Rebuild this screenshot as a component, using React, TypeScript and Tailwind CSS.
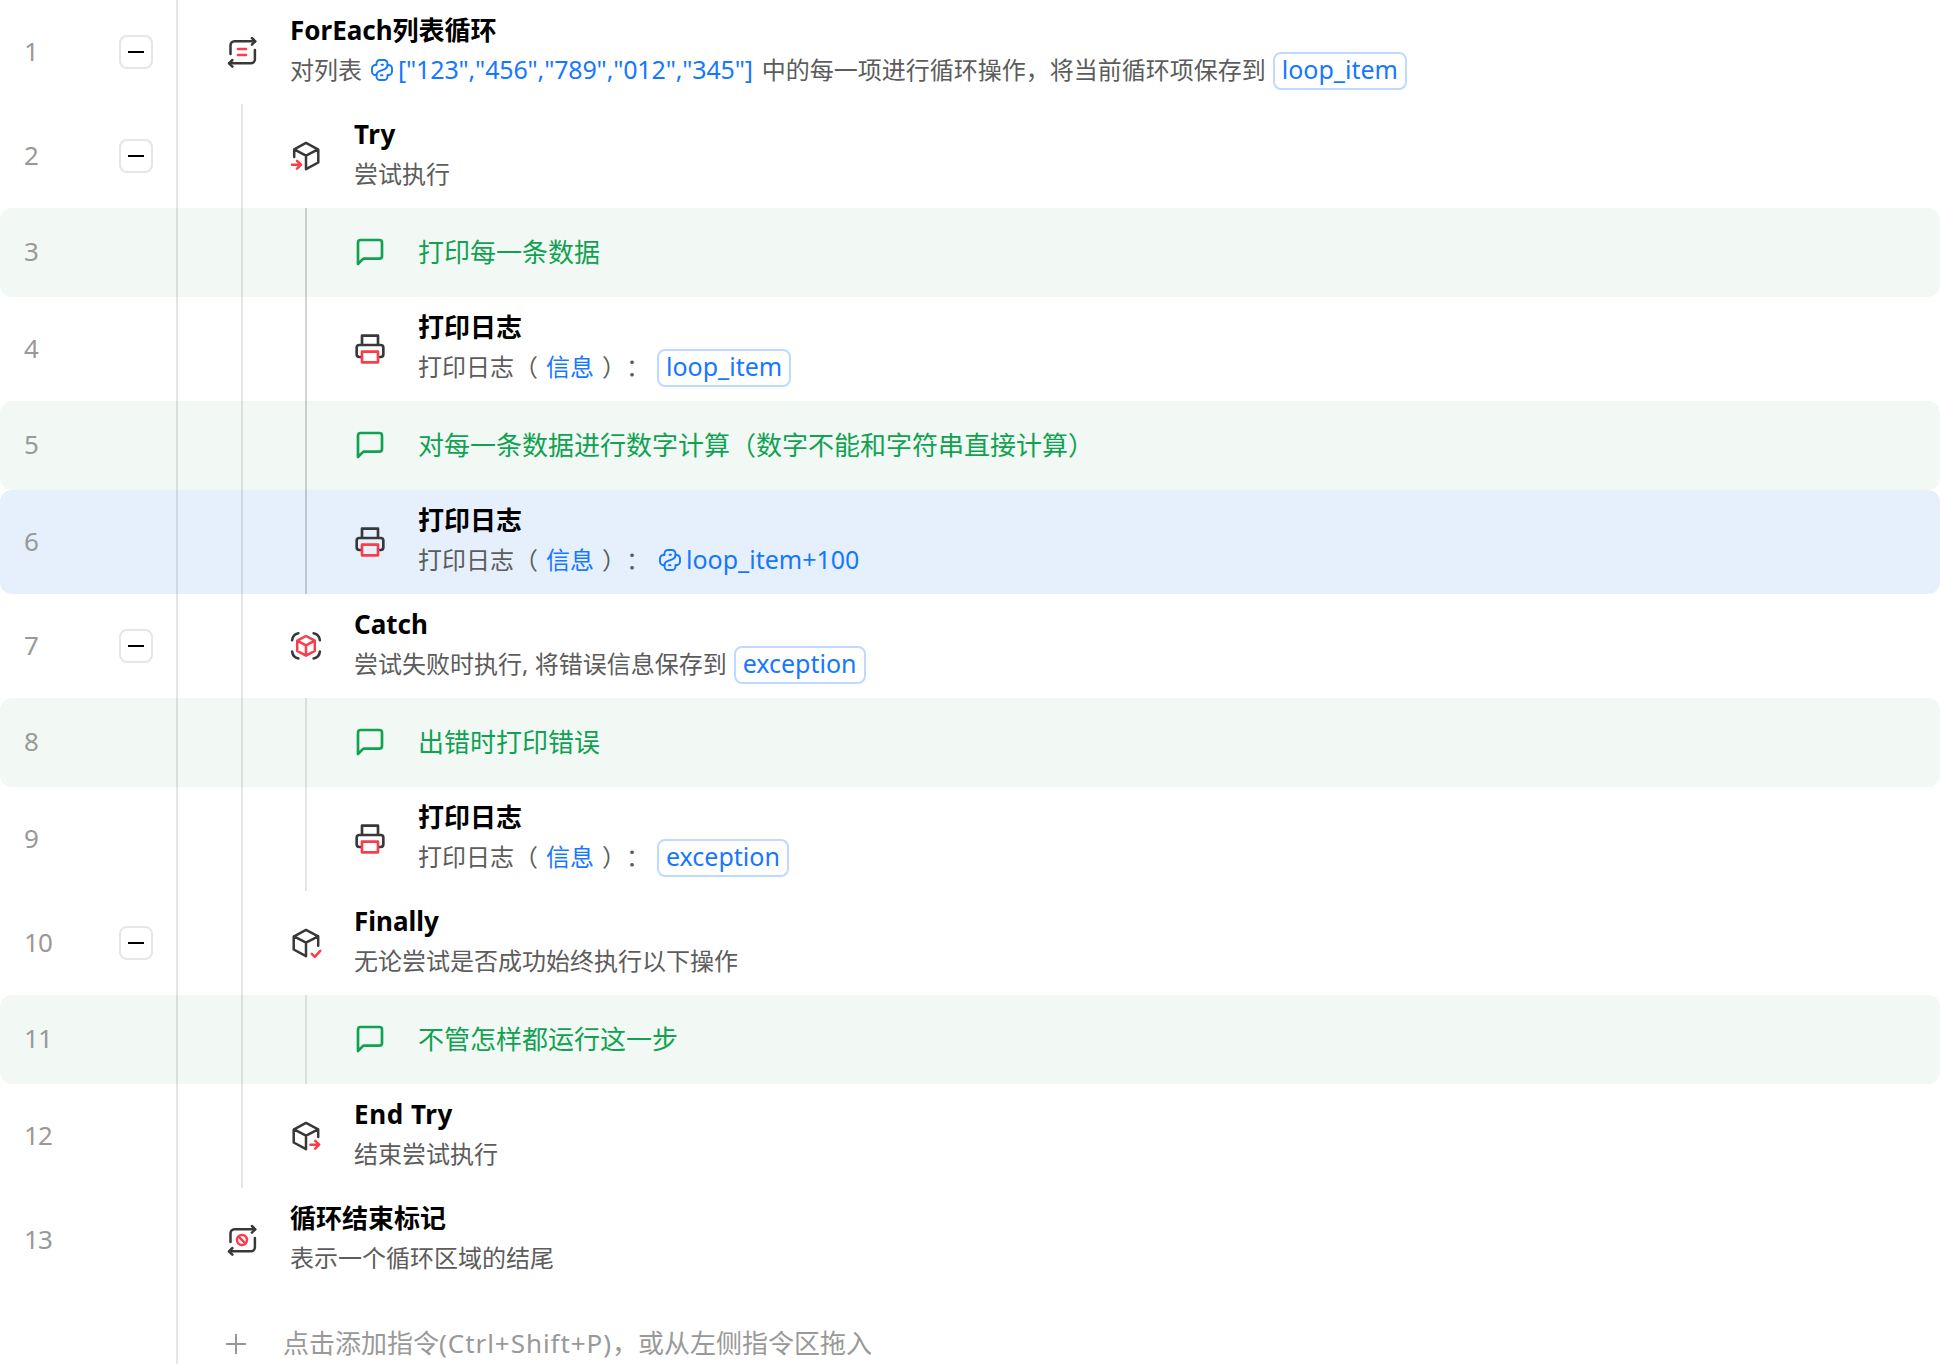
import type { ReactNode } from "react";

type Row = {
  kind: "block" | "comment";
  depth: number;
  icon: ReactNode;
  title: ReactNode;
  body?: ReactNode;
  foldable?: boolean;
  selected?: boolean;
  guides?: ("normal" | "active")[];
};

const DARK = "#383838";
const RED = "#f93d4b";

function Icon({ children }: { children: ReactNode }) {
  return (
    <svg
      viewBox="0 0 32 32"
      className="w-8 h-8 shrink-0"
      fill="none"
      strokeWidth="2.5"
      strokeLinecap="round"
      strokeLinejoin="round"
    >
      {children}
    </svg>
  );
}

function LoopArrows() {
  return (
    <g stroke={DARK}>
      <path d="M4.5 18V9.3a4 4 0 0 1 4-4H29" />
      <path d="M25.9 2l3.4 3.3-3.4 3.3" />
      <path d="M28.9 14v9.3a4 4 0 0 1-4 4H3.5" />
      <path d="M6.4 24 3 27.3l3.4 3.3" />
    </g>
  );
}

const loopIcon = (
  <Icon>
    <LoopArrows />
    <path d="M12 13.1h8M12 19h8" stroke={RED} />
  </Icon>
);

const loopEndIcon = (
  <Icon>
    <LoopArrows />
    <circle cx="16" cy="16" r="5" stroke={RED} />
    <path d="M12.6 12.6l6.8 6.8" stroke={RED} />
  </Icon>
);

const tryIcon = (
  <Icon>
    <path
      d="M4.2 17V9.3L16 2.9l11.9 6.4a1 1 0 0 1 .4.8v12.4L16 29.2V15.7M4.2 9.3 16 15.7l12-6.4"
      stroke={DARK}
    />
    <path d="M2 24.7h8.6M7 20.8l4 3.9-4 4" stroke={RED} />
  </Icon>
);

const finallyIcon = (
  <Icon>
    <path
      d="M28.2 18.7V9.3L16 2.9 4.1 9.3a1 1 0 0 0-.4.8v12.4L16 29.2V15.7M28.2 9.3 16 15.7 4 9.3"
      stroke={DARK}
    />
    <path d="M21.8 26.8l3 3 5.4-6" stroke={RED} />
  </Icon>
);

const endTryIcon = (
  <Icon>
    <path
      d="M28.2 17V9.3L16 2.9 4.1 9.3a1 1 0 0 0-.4.8v12.4L16 29.2V15.7M28.2 9.3 16 15.7 4 9.3"
      stroke={DARK}
    />
    <path d="M20.4 24.7h8.4M25.2 20.8l4 3.9-4 4" stroke={RED} />
  </Icon>
);

const catchIcon = (
  <Icon>
    <path
      d="M2.1 10.3A8 8 0 0 1 8.4 3.3M23.6 3.3a8 8 0 0 1 6.3 7M29.9 21.5a8 8 0 0 1-6.3 7M8.4 28.5a8 8 0 0 1-6.3-7"
      stroke={DARK}
    />
    <path
      d="M16 6l8.8 4.7v10.2L16 25.7l-8.8-4.8V10.7zM7.2 10.7 16 15.4l8.8-4.7M16 15.4v10.3"
      stroke={RED}
    />
  </Icon>
);

const commentIcon = (
  <svg viewBox="0 0 24 24" className="w-8 h-8 mb-px shrink-0" fill="none">
    <path
      d="M21 15a2 2 0 0 1-2 2H7l-4 4V5a2 2 0 0 1 2-2h14a2 2 0 0 1 2 2z"
      stroke="#11a152"
      strokeWidth="2"
      strokeLinejoin="round"
    />
  </svg>
);

const printIcon = (
  <svg viewBox="0 0 24 24" className="w-8 h-8 shrink-0" fill="none" strokeWidth="2">
    <path
      d="M6 9V2h12v7M6 18H4a2 2 0 0 1-2-2v-5a2 2 0 0 1 2-2h16a2 2 0 0 1 2 2v5a2 2 0 0 1-2 2h-2"
      stroke={DARK}
      strokeLinejoin="round"
    />
    <path d="M6 14h12v8H6z" stroke={RED} strokeLinejoin="round" />
  </svg>
);

function PythonIcon() {
  return (
    <svg
      viewBox="0 0 22 22"
      className="w-[22px] h-[22px] shrink-0"
      fill="none"
      stroke="#1677ff"
      strokeWidth="1.9"
      strokeLinecap="round"
      strokeLinejoin="round"
    >
      <path d="M10.5 5.8h1.5M5.5 6V4.5A3.5 3.5 0 0 1 9 1h4a3.5 3.5 0 0 1 3.5 3.5V6c0 2.500-1.200 3.600-3.200 4.300L9 11.800c-2.200.8-3.500 1.900-3.500 4.200h-1A3.5 3.5 0 0 1 1 12.500v-3A3.5 3.5 0 0 1 4.5 6h1" />
      <path d="M11.5 16.200H10M5.500 16v1.500A3.500 3.500 0 0 0 9 21h4a3.500 3.500 0 0 0 3.500-3.500V16h1a3.500 3.500 0 0 0 3.500-3.500v-3A3.500 3.500 0 0 0 17.500 6h-1" />
    </svg>
  );
}

function Expr({ children }: { children: ReactNode }) {
  return (
    <span className="flex items-center gap-[5px] mx-[9px] text-[#1677ff]">
      <PythonIcon />
      <span className="text-[25px]">{children}</span>
    </span>
  );
}

function Chip({ children }: { children: ReactNode }) {
  return (
    <span className="flex items-center h-[38px] mt-0.5 px-[7px] pb-0.5 ml-[7px] rounded-lg border-2 border-[#bfdaff] text-[25px] text-[#1677ff]">
      {children}
    </span>
  );
}

function LogText({ children }: { children: ReactNode }) {
  return (
    <>
      打印日志（<span className="mx-2 text-[#1677ff]">信息</span>）：
      {children}
    </>
  );
}

const rows: Row[] = [
  {
    kind: "block",
    depth: 0,
    icon: loopIcon,
    title: "ForEach列表循环",
    foldable: true,
    body: (
      <>
        对列表
        <Expr>
          <span className="tracking-[-0.16px]">{'["123","456","789","012","345"]'}</span>
        </Expr>
        中的每一项进行循环操作，将当前循环项保存到
        <Chip>loop_item</Chip>
      </>
    ),
  },
  {
    kind: "block",
    depth: 1,
    icon: tryIcon,
    title: <span className="tracking-[0.6px]">Try</span>,
    body: "尝试执行",
    foldable: true,
    guides: ["normal"],
  },
  { kind: "comment", depth: 2, icon: commentIcon, title: "打印每一条数据", guides: ["normal", "active"] },
  {
    kind: "block",
    depth: 2,
    icon: printIcon,
    title: "打印日志",
    body: (
      <LogText>
        <Chip>loop_item</Chip>
      </LogText>
    ),
    guides: ["normal", "active"],
  },
  {
    kind: "comment",
    depth: 2,
    icon: commentIcon,
    title: "对每一条数据进行数字计算（数字不能和字符串直接计算）",
    guides: ["normal", "active"],
  },
  {
    kind: "block",
    depth: 2,
    icon: printIcon,
    title: "打印日志",
    body: (
      <LogText>
        <Expr>loop_item+100</Expr>
      </LogText>
    ),
    selected: true,
    guides: ["normal", "active"],
  },
  {
    kind: "block",
    depth: 1,
    icon: catchIcon,
    title: "Catch",
    body: (
      <>
        <span>尝试失败时执行, 将错误信息保存到</span>
        <Chip>exception</Chip>
      </>
    ),
    foldable: true,
    guides: ["normal"],
  },
  { kind: "comment", depth: 2, icon: commentIcon, title: "出错时打印错误", guides: ["normal", "normal"] },
  {
    kind: "block",
    depth: 2,
    icon: printIcon,
    title: "打印日志",
    body: (
      <LogText>
        <Chip>exception</Chip>
      </LogText>
    ),
    guides: ["normal", "normal"],
  },
  {
    kind: "block",
    depth: 1,
    icon: finallyIcon,
    title: "Finally",
    body: "无论尝试是否成功始终执行以下操作",
    foldable: true,
    guides: ["normal"],
  },
  { kind: "comment", depth: 2, icon: commentIcon, title: "不管怎样都运行这一步", guides: ["normal", "normal"] },
  {
    kind: "block",
    depth: 1,
    icon: endTryIcon,
    title: <span className="tracking-[0.6px]">End Try</span>,
    body: "结束尝试执行",
    guides: ["normal"],
  },
  { kind: "block", depth: 0, icon: loopEndIcon, title: "循环结束标记", body: "表示一个循环区域的结尾" },
];

function rowClass(row: Row) {
  if (row.kind === "comment") return "flex h-[89px] rounded-xl bg-[#f2f9f5]";
  if (row.selected) return "flex h-26 rounded-xl bg-[#e6f0fd]";
  return "flex h-26";
}

function FlowRow({ row, index }: { row: Row; index: number }) {
  return (
    <div className={rowClass(row)}>
      {/* Gutter: line number + fold toggle */}
      <div className="w-[178px] shrink-0 flex items-center border-r-2 border-black/10 pl-6">
        <span className="w-[95px] pb-0.5 text-[26px] tracking-[-0.8px] text-[#999]">{index + 1}</span>
        {row.foldable && (
          <button className="w-[34px] h-[34px] flex items-center justify-center rounded-lg border-2 border-[#e6e6e6] bg-white">
            <span className="w-4 h-0.5 bg-black" />
          </button>
        )}
      </div>

      {/* Indent guides */}
      {row.guides?.map((guide, i) => (
        <div
          key={i}
          className={
            guide === "active"
              ? "w-16 shrink-0 border-r-2 border-black/[0.17]"
              : i === 0
                ? "w-[65px] shrink-0 border-r-2 border-black/10"
                : "w-16 shrink-0 border-r-2 border-black/10"
          }
        />
      ))}

      <div className={row.depth === 0 ? "flex items-center gap-8 pl-12" : "flex items-center gap-8 pl-[47px]"}>
        {row.icon}
        {row.kind === "comment" ? (
          <span className="text-[26px] text-[#11a152]">{row.title}</span>
        ) : (
          <div className="flex flex-col pb-1">
            <div className="h-10 flex items-center text-[26px] font-bold text-black">{row.title}</div>
            <div className="h-10 flex items-center text-2xl text-[#5c5c5c]">{row.body}</div>
          </div>
        )}
      </div>
    </div>
  );
}

export default function App() {
  return (
    <div className="w-[1940px] h-[1364px] overflow-hidden bg-white whitespace-nowrap font-['Noto_Sans','Noto_Sans_CJK_SC',sans-serif] [text-spacing-trim:space-all]">
      {rows.map((row, i) => (
        <FlowRow key={i} row={row} index={i} />
      ))}

      {/* Add command */}
      <div className="flex h-26">
        <div className="w-[178px] shrink-0 border-r-2 border-black/10" />
        <div className="flex items-center gap-9 pl-[47px] text-[26px] text-[#999]">
          <svg viewBox="0 0 22 22" className="w-[22px] h-[22px]" stroke="#999" strokeWidth="2">
            <path d="M11 1v20M1 11h20" />
          </svg>
          <span className="pb-0.5">
            点击添加指令<span className="tracking-[0.95px]">(Ctrl+Shift+P)</span>，或从左侧指令区拖入
          </span>
        </div>
      </div>
    </div>
  );
}
